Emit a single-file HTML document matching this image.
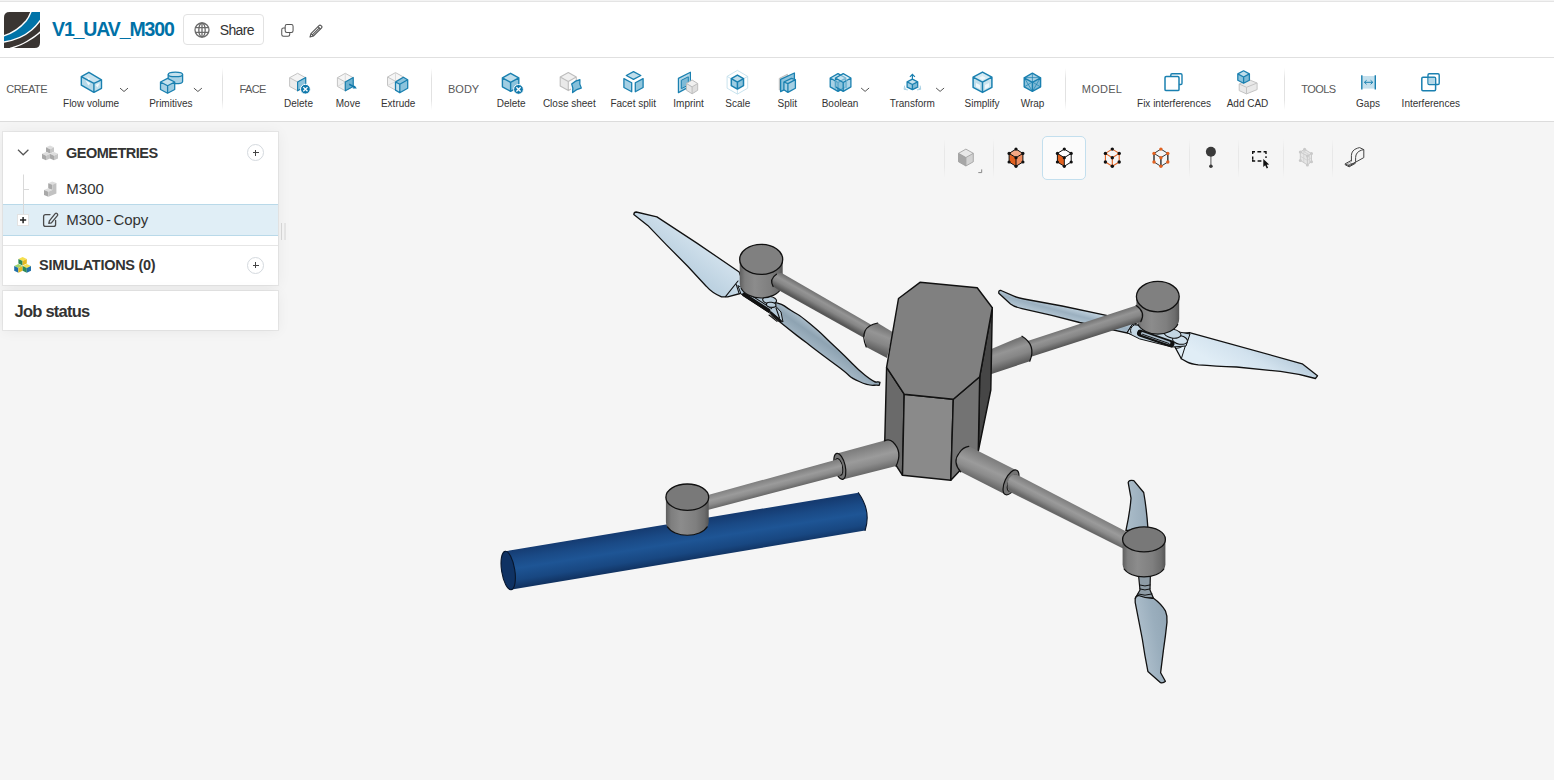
<!DOCTYPE html>
<html><head><meta charset="utf-8"><title>V1_UAV_M300</title>
<style>
*{box-sizing:border-box;margin:0;padding:0}
html,body{width:1554px;height:780px;overflow:hidden;background:#f5f5f5;font-family:"Liberation Sans",sans-serif;color:#333}
#top{position:absolute;left:0;top:0;width:1554px;height:58px;background:#fff;border-top:2px solid #e4e4e4;border-bottom:1px solid #e0e0e0}
#top:before{content:'';position:absolute;left:0;top:-2px;width:100%;height:1px;background:#f3f3f3}
#logo{position:absolute;left:4px;top:10px;width:36px;height:36px}
#title{position:absolute;left:52px;top:15px;font-size:19.5px;font-weight:bold;color:#0071a7;line-height:24px;white-space:nowrap;letter-spacing:-1.12px}
#share{position:absolute;left:183px;top:12px;width:81px;height:31px;border:1px solid #e2e2e2;border-radius:4px;background:#fff}
#share span{position:absolute;left:35.8px;top:6px;font-size:14px;line-height:18px;color:#333;letter-spacing:-0.65px}
#toolbar{position:absolute;left:0;top:58px;width:1554px;height:64px;background:#fff;border-bottom:1px solid #dcdcdc}
.grp{position:absolute;top:22.8px;font-size:11px;color:#595959;line-height:16px;white-space:nowrap}
.tl{position:absolute;top:38.5px;font-size:10px;color:#333;line-height:14px;white-space:nowrap;transform:translateX(-50%)}
.sep{position:absolute;top:10px;width:1px;height:42px;background:linear-gradient(#fff,#e2e2e2 25%,#e2e2e2 75%,#fff)}
.ico{position:absolute;overflow:visible}
.chev{position:absolute;top:30px;width:9px;height:6px;overflow:visible}
#panel{position:absolute;left:3px;top:132px;width:275px;height:153px;background:#fff;box-shadow:0 0 0 1px rgba(0,0,0,.05),0 1px 14px rgba(0,0,0,.06)}
#job{position:absolute;left:3px;top:291px;width:275px;height:39px;background:#fff;box-shadow:0 0 0 1px rgba(0,0,0,.05),0 1px 14px rgba(0,0,0,.06)}
#job span{position:absolute;left:11.5px;top:9px;font-size:16.5px;font-weight:bold;line-height:22px;letter-spacing:-0.75px;color:#333}
.row{position:absolute;left:0;width:275px}
.rt{position:absolute;font-size:15px;line-height:20px;white-space:nowrap;color:#333}
.plus{position:absolute;width:17px;height:17px;border:1px solid #d4d9de;border-radius:50%;background:#fff}
.plus:before{content:"";position:absolute;left:4.5px;top:7px;width:6px;height:1px;background:#444}
.plus:after{content:"";position:absolute;left:7px;top:4.5px;width:1px;height:6px;background:#444}
#vt{position:absolute;left:0;top:0}
.vsep{position:absolute;top:139px;width:1px;height:39px;background:linear-gradient(#f5f5f5,#e8e8e8 30%,#e8e8e8 70%,#f5f5f5)}
</style></head><body>
<div id="top">
<svg id="logo" viewBox="0 0 36 36">
<path d="M5.5 0H36V30.5Q36 36 30.5 36H0V5.5Q0 0 5.5 0Z" fill="#3a3532"/>
<path d="M0 23.8C8 21.5 16 16 22.2 8.8C24.4 6 25.8 3 26.9 0H36V8.8C33 13 30 16 27.6 18C20 24.5 10 28.5 0 30Z" fill="#0073a8"/>
<path d="M-0.5 23.9C8 21.5 16 16 22.2 8.8C24.4 6 25.8 3 27.1 -0.5" fill="none" stroke="#fff" stroke-width="1.4"/>
<path d="M-0.5 30.1C10 28.5 20 24.5 27.6 18C30 16 33 13 36.5 8.2" fill="none" stroke="#fff" stroke-width="1.4"/>
<path d="M6 36.4C13 34.5 18 32.5 22.9 29.5C28 26.5 32 24 36.5 19.8" fill="none" stroke="#fff" stroke-width="1.4"/>
</svg>
<div id="title">V1_UAV_M300</div>
<div id="share">
<svg style="position:absolute;left:10px;top:7px" width="16" height="16" viewBox="0 0 16 16" fill="none" stroke="#6b6b6b" stroke-width="1.3"><circle cx="8" cy="8" r="7"/><ellipse cx="8" cy="8" rx="3.2" ry="7"/><path d="M8 1V15M1.3 5.7H14.7M1.3 10.3H14.7"/></svg>
<span>Share</span></div>
<svg style="position:absolute;left:280.5px;top:22px" width="13" height="13" viewBox="0 0 14 14" fill="none" stroke="#555" stroke-width="1.1"><rect x="4.5" y="0.6" width="8.5" height="8.5" rx="1.8" fill="#fff"/><path d="M4.5 4.3H2.6Q0.8 4.3 0.8 6.1V11.4Q0.8 13.2 2.6 13.2H7.6Q9.4 13.2 9.4 11.4V9.1"/></svg>
<svg style="position:absolute;left:309px;top:22px" width="14" height="14" viewBox="0 0 14 14" fill="none" stroke="#555" stroke-width="1.1" stroke-linejoin="round"><path d="M1 13L2 9.6L10 1.6Q11 0.6 12 1.6L12.6 2.2Q13.4 3.2 12.4 4.2L4.4 12Z"/><path d="M2 9.6L4.4 12M9 2.6L11.4 5M3.6 10.6L10.4 3.8"/></svg>
</div>
<div id="toolbar">
<div class="grp" style="left:6.2px;letter-spacing:-0.49px">CREATE</div>
<div class="grp" style="left:239.4px;letter-spacing:-0.6px">FACE</div>
<div class="grp" style="left:448px;letter-spacing:0px">BODY</div>
<div class="grp" style="left:1081.8px;letter-spacing:0.24px">MODEL</div>
<div class="grp" style="left:1301.2px;letter-spacing:-0.53px">TOOLS</div>
<div class="tl" style="left:91.1px">Flow volume</div>
<div class="tl" style="left:170.8px">Primitives</div>
<div class="tl" style="left:298.5px">Delete</div>
<div class="tl" style="left:348px">Move</div>
<div class="tl" style="left:398.2px">Extrude</div>
<div class="tl" style="left:511.2px">Delete</div>
<div class="tl" style="left:569.3px">Close sheet</div>
<div class="tl" style="left:633.2px">Facet split</div>
<div class="tl" style="left:688.6px">Imprint</div>
<div class="tl" style="left:737.8px">Scale</div>
<div class="tl" style="left:787.3px">Split</div>
<div class="tl" style="left:840px">Boolean</div>
<div class="tl" style="left:912.3px">Transform</div>
<div class="tl" style="left:982.1px">Simplify</div>
<div class="tl" style="left:1032.5px">Wrap</div>
<div class="tl" style="left:1174px">Fix interferences</div>
<div class="tl" style="left:1247.5px">Add CAD</div>
<div class="tl" style="left:1368px">Gaps</div>
<div class="tl" style="left:1430.8px">Interferences</div>
<div class="sep" style="left:222px"></div>
<div class="sep" style="left:431px"></div>
<div class="sep" style="left:1064.5px"></div>
<div class="sep" style="left:1283.5px"></div>
<svg style="position:absolute;left:0;top:0" width="1554" height="64" viewBox="0 58 1554 64">
<g stroke-linejoin="round"><polygon points="88.9,72.3 101.5,79.8 93.9,83.4 81.3,76.6" fill="#c9e3ef"/><polygon points="81.3,76.6 93.9,83.4 93.9,92.4 81.3,85.2" fill="#b5d9e9"/><polygon points="93.9,83.4 101.5,79.8 101.5,88.3 93.9,92.4" fill="#c0dfec"/><path d="M88.9 72.3L101.5 79.8L101.5 88.3L93.9 92.4L81.3 85.2L81.3 76.6ZM81.3 76.6L93.9 83.4L101.5 79.8M93.9 83.4L93.9 92.4" fill="none" stroke="#1a80b0" stroke-width="1.4"/></g>
<path d="M85.6 80.6L90.4 83.2L88.4 85.6ZM95.6 85L99.6 83L97.6 87.6ZM86.8 77L90.6 79L88.6 80Z" fill="#f1f8fb"/>
<path d="M120.0 88.1L124.0 91.5L128.0 88.1" fill="none" stroke="#555" stroke-width="1"/>
<g stroke="#1a80b0" stroke-width="1.3" fill="#a9d2e5"><path d="M168.2 74.4V81.4A7.2 2.3 0 0 0 182.6 81.4V74.4"/><ellipse cx="175.4" cy="74.4" rx="7.2" ry="2.3" fill="#c6e2ee"/></g>
<polygon points="167.6,78.3 174.7,82.0 167.6,85.8 160.5,82.0" fill="#c6e2ee"/><polygon points="160.5,82.0 167.6,85.8 167.6,93.3 160.5,89.5" fill="#a9d2e5"/><polygon points="167.6,85.8 174.7,82.0 174.7,89.5 167.6,93.3" fill="#9ccbe1"/><path d="M167.6 78.3 L174.7 82.0 L174.7 89.5 L167.6 93.3 L160.5 89.5 L160.5 82.0Z M160.5 82.0 L167.6 85.8 L174.7 82.0 M167.6 85.8 L167.6 93.3" fill="none" stroke="#1a80b0" stroke-width="1.3" stroke-linejoin="round"/>
<path d="M193.9 88.1L197.9 91.5L201.9 88.1" fill="none" stroke="#555" stroke-width="1"/>
<polygon points="297.6,73.3 305.6,77.7 297.6,82.0 289.6,77.7" fill="#f4f4f4"/><polygon points="289.6,77.7 297.6,82.0 297.6,90.8 289.6,86.4" fill="#ececec"/><polygon points="297.6,82.0 305.6,77.7 305.6,86.4 297.6,90.8" fill="#7fbad6"/><path d="M297.6 73.3 L305.6 77.7 L305.6 86.4 L297.6 90.8 L289.6 86.4 L289.6 77.7Z M289.6 77.7 L297.6 82.0 L305.6 77.7 M297.6 82.0 L297.6 90.8" fill="none" stroke="#c4c4c4" stroke-width="1" stroke-linejoin="round"/>
<path d="M297.6 82L305.7 77.5L305.7 86L297.6 90.8Z" fill="#8cc3dc" stroke="#1a80b0" stroke-width="1.2" stroke-linejoin="round"/>
<circle cx="305.4" cy="89.2" r="4.9" fill="#0f78ab" stroke="#fff" stroke-width="1"/><path d="M303.3 87.1L307.5 91.3M307.5 87.1L303.3 91.3" stroke="#fff" stroke-width="1.3"/>
<polygon points="345.3,73.3 353.2,77.7 345.3,82.0 337.4,77.7" fill="#f6f6f6"/><polygon points="337.4,77.7 345.3,82.0 345.3,90.8 337.4,86.4" fill="#f0f0f0"/><polygon points="345.3,82.0 353.2,77.7 353.2,86.4 345.3,90.8" fill="#7fbad6"/><path d="M345.3 73.3 L353.2 77.7 L353.2 86.4 L345.3 90.8 L337.4 86.4 L337.4 77.7Z M337.4 77.7 L345.3 82.0 L353.2 77.7 M345.3 82.0 L345.3 90.8" fill="none" stroke="#c4c4c4" stroke-width="1" stroke-linejoin="round"/>
<path d="M337.4 86.5L345.3 82L353.2 86.5M345.3 73.3V82" stroke="#d6d6d6" stroke-width="0.8" fill="none"/>
<path d="M345.3 82L353.2 77.5L353.2 86.5L345.3 90.8Z" fill="#6fb2d0" stroke="#1a80b0" stroke-width="1.2" stroke-linejoin="round"/>
<path d="M349.2 84.2L355 87.4" stroke="#0f78ab" stroke-width="1.6"/><path d="M356.8 88.4L352.6 88.6L354.6 85.4Z" fill="#0f78ab"/>
<polygon points="395.5,72.6 403.5,77.0 395.5,81.3 387.5,77.0" fill="#f6f6f6"/><polygon points="387.5,77.0 395.5,81.3 395.5,90.1 387.5,85.7" fill="#f0f0f0"/><polygon points="395.5,81.3 403.5,77.0 403.5,85.7 395.5,90.1" fill="#f0f0f0"/><path d="M395.5 72.6 L403.5 77.0 L403.5 85.7 L395.5 90.1 L387.5 85.7 L387.5 77.0Z M387.5 77.0 L395.5 81.3 L403.5 77.0 M395.5 81.3 L395.5 90.1" fill="none" stroke="#c4c4c4" stroke-width="1" stroke-linejoin="round"/>
<path d="M387.4 85.6L395.5 81.6L403.4 85.6M395.5 72.6V81.6" stroke="#d6d6d6" stroke-width="0.8" fill="none"/>
<g stroke-linejoin="round"><polygon points="395.5,82 403.4,77.3 407.7,79.8 407.7,88.3 399.8,92.8 395.5,90.1" fill="#8cc3dc"/><polygon points="395.5,82 399.8,84.3 399.8,92.8 395.5,90.1" fill="#c4e0ed"/><path d="M395.5 82L403.4 77.3L407.7 79.8L407.7 88.3L399.8 92.8L395.5 90.1ZM395.5 82L399.8 84.3L407.7 79.8M399.8 84.3V92.8" fill="none" stroke="#1a80b0" stroke-width="1.3"/></g>
<polygon points="510.6,73.3 518.8,77.8 510.6,82.3 502.4,77.8" fill="#c0deeb"/><polygon points="502.4,77.8 510.6,82.3 510.6,91.3 502.4,86.8" fill="#9fcde2"/><polygon points="510.6,82.3 518.8,77.8 518.8,86.8 510.6,91.3" fill="#8cc3dc"/><path d="M510.6 73.3 L518.8 77.8 L518.8 86.8 L510.6 91.3 L502.4 86.8 L502.4 77.8Z M502.4 77.8 L510.6 82.3 L518.8 77.8 M510.6 82.3 L510.6 91.3" fill="none" stroke="#1a80b0" stroke-width="1.4" stroke-linejoin="round"/>
<circle cx="518.5" cy="89.4" r="4.9" fill="#0f78ab" stroke="#fff" stroke-width="1"/><path d="M516.4 87.3L520.6 91.5M520.6 87.3L516.4 91.5" stroke="#fff" stroke-width="1.3"/>
<g stroke-linejoin="round"><polygon points="568.3,72.4 576.3,76.9 568.3,81.5 560.2,76.9" fill="#f0f0f0"/><polygon points="560.2,76.9 568.3,81.5 568.3,90.6 560.2,86.1" fill="#e9e9e9"/><polygon points="568.3,81.5 576.3,76.9 576.3,86.1 568.3,90.6" fill="#fbfbfb"/><path d="M568.3 72.4L576.3 76.9L576.3 83M568.3 90.6L560.2 86.1L560.2 76.9L568.3 72.4M560.2 76.9L568.3 81.5L576.3 76.9M568.3 81.5V90.6L571 89" fill="none" stroke="#bdbdbd" stroke-width="1.1"/><path d="M571.7 84Q575.5 80.5 579.9 79.6Q579 84 581.3 88Q576.5 89 572.6 92.6Q573.6 88 571.7 84Z" fill="#86c0da" stroke="#1a80b0" stroke-width="1.3"/></g>
<g stroke="#1a80b0" stroke-width="1.3" stroke-linejoin="round"><polygon points="633.5,71.6 640.8,75.5 633.5,79.4 626.3,75.5" fill="#c0deeb"/><polygon points="623.9,78.6 631.7,82.8 631.7,91.8 623.9,87.5" fill="#a6d0e4"/><polygon points="635.3,82.8 643.1,78.6 643.1,87.5 635.3,91.8" fill="#93c7de"/></g>
<g stroke-linejoin="round"><polygon points="678.4,78.4 690.4,72.2 690.4,86.1 678.4,92.6" fill="#b4d8e8" stroke="#1a80b0" stroke-width="1.2"/><polygon points="681.3,80.3 688.3,76.8 688.3,85.1 681.3,88.7" fill="#7fbad6" stroke="#1a80b0" stroke-width="1"/></g>
<polygon points="692.1,80.0 697.7,83.5 692.1,86.9 686.5,83.5" fill="#f0f0f0"/><polygon points="686.5,83.5 692.1,86.9 692.1,93.8 686.5,90.3" fill="#e6e6e6"/><polygon points="692.1,86.9 697.7,83.5 697.7,90.3 692.1,93.8" fill="#dedede"/><path d="M692.1 80.0 L697.7 83.5 L697.7 90.3 L692.1 93.8 L686.5 90.3 L686.5 83.5Z M686.5 83.5 L692.1 86.9 L697.7 83.5 M692.1 86.9 L692.1 93.8" fill="none" stroke="#bdbdbd" stroke-width="1" stroke-linejoin="round"/>
<path d="M737.4 70.4L747.7 76.4L747.7 88.2L737.4 94.1L727.1 88.2L727.1 76.4ZM727.1 76.4L737.4 82.3L747.7 76.4M737.4 82.3V94.1" fill="none" stroke="#c3e0ec" stroke-width="0.9"/>
<polygon points="737.4,75.1 743.5,78.6 737.4,82.1 731.3,78.6" fill="#c0deeb"/><polygon points="731.3,78.6 737.4,82.1 737.4,89.1 731.3,85.6" fill="#9fcde2"/><polygon points="737.4,82.1 743.5,78.6 743.5,85.6 737.4,89.1" fill="#8cc3dc"/><path d="M737.4 75.1 L743.5 78.6 L743.5 85.6 L737.4 89.1 L731.3 85.6 L731.3 78.6Z M731.3 78.6 L737.4 82.1 L743.5 78.6 M737.4 82.1 L737.4 89.1" fill="none" stroke="#1a80b0" stroke-width="1.5" stroke-linejoin="round"/>
<g stroke-linejoin="round"><polygon points="779.3,78.4 787.4,74.3 787.4,86 779.3,90" fill="#dcdcdc" stroke="#bdbdbd" stroke-width="1"/><polygon points="780.6,79.4 794.4,73 794.4,84.6 780.6,91.6" fill="#8cc3dc" stroke="#1a80b0" stroke-width="1.3"/><polygon points="783.9,82 791.5,78.4 795.4,79.6 795.4,88.2 787.9,92.4 783.9,89.7" fill="#a6d0e4"/><path d="M783.9 82L791.5 78.4L795.4 79.6L795.4 88.2L787.9 92.4L783.9 89.7ZM783.9 82L787.9 83.6L795.4 79.6M787.9 83.6V92.4" fill="none" stroke="#1a80b0" stroke-width="1.3"/></g>
<g opacity="0.999"><polygon points="838.0,73.6 845.8,78.0 838.0,82.5 830.2,78.0" fill="#c6e2ee"/><polygon points="830.2,78.0 838.0,82.5 838.0,91.4 830.2,86.9" fill="#a9d2e5"/><polygon points="838.0,82.5 845.8,78.0 845.8,86.9 838.0,91.4" fill="#8cc3dc"/><path d="M838.0 73.6 L845.8 78.0 L845.8 86.9 L838.0 91.4 L830.2 86.9 L830.2 78.0Z M830.2 78.0 L838.0 82.5 L845.8 78.0 M838.0 82.5 L838.0 91.4" fill="none" stroke="#1a80b0" stroke-width="1.3" stroke-linejoin="round"/></g>
<g><polygon points="843.2,73.6 850.9,78.0 843.2,82.5 835.5,78.0" fill="rgba(198,226,238,.55)"/><polygon points="835.5,78.0 843.2,82.5 843.2,91.4 835.5,86.9" fill="rgba(140,195,220,.55)"/><polygon points="843.2,82.5 850.9,78.0 850.9,86.9 843.2,91.4" fill="rgba(150,200,224,.75)"/><path d="M843.2 73.6 L850.9 78.0 L850.9 86.9 L843.2 91.4 L835.5 86.9 L835.5 78.0Z M835.5 78.0 L843.2 82.5 L850.9 78.0 M843.2 82.5 L843.2 91.4" fill="none" stroke="#1a80b0" stroke-width="1.3" stroke-linejoin="round"/></g>
<path d="M835.4 80V89M846.6 80V88.6" stroke="#6fb2d0" stroke-width="0.8"/>
<path d="M861.1 88.0L865.1 91.4L869.1 88.0" fill="none" stroke="#555" stroke-width="1"/>
<polygon points="912.4,79.2 917.7,81.8 912.4,84.5 907.1,81.8" fill="#c6e2ee"/><polygon points="907.1,81.8 912.4,84.5 912.4,89.7 907.1,87.1" fill="#9fcde2"/><polygon points="912.4,84.5 917.7,81.8 917.7,87.1 912.4,89.7" fill="#7fbad6"/><path d="M912.4 79.2 L917.7 81.8 L917.7 87.1 L912.4 89.7 L907.1 87.1 L907.1 81.8Z M907.1 81.8 L912.4 84.5 L917.7 81.8 M912.4 84.5 L912.4 89.7" fill="none" stroke="#1a80b0" stroke-width="1.3" stroke-linejoin="round"/>
<path d="M912.4 79.4V74.8M909.9 76.9L912.4 74.3L914.9 76.9" fill="none" stroke="#1a80b0" stroke-width="1.2"/>
<path d="M907 87.3L904.4 88.9M904.7 85.6L904.1 89.3L907.8 89.9M917.8 87.3L920.4 88.9M920.1 85.6L920.7 89.3L917 89.9" fill="none" stroke="#a6d0e4" stroke-width="1"/>
<path d="M936.1 88.0L940.1 91.4L944.1 88.0" fill="none" stroke="#555" stroke-width="1"/>
<polygon points="982.5,72.1 991.9,77.2 982.5,82.2 973.1,77.2" fill="#d4e9f2"/><polygon points="973.1,77.2 982.5,82.2 982.5,92.4 973.1,87.3" fill="#c0deeb"/><polygon points="982.5,82.2 991.9,77.2 991.9,87.3 982.5,92.4" fill="#c9e4ef"/><path d="M982.5 72.1 L991.9 77.2 L991.9 87.3 L982.5 92.4 L973.1 87.3 L973.1 77.2Z M973.1 77.2 L982.5 82.2 L991.9 77.2 M982.5 82.2 L982.5 92.4" fill="none" stroke="#1a80b0" stroke-width="1.5" stroke-linejoin="round"/>
<path d="M979 78L982.5 76L986 78L982.5 80ZM976 83L980 85V89L976 87ZM985 85L989 83V87L985 89Z" fill="#eef7fb"/>
<polygon points="1032.4,73.2 1040.6,77.8 1032.4,82.3 1024.2,77.8" fill="#a6d0e4"/><polygon points="1024.2,77.8 1032.4,82.3 1032.4,91.4 1024.2,86.8" fill="#8cc3dc"/><polygon points="1032.4,82.3 1040.6,77.8 1040.6,86.8 1032.4,91.4" fill="#7fbad6"/><path d="M1032.4 73.2 L1040.6 77.8 L1040.6 86.8 L1032.4 91.4 L1024.2 86.8 L1024.2 77.8Z M1024.2 77.8 L1032.4 82.3 L1040.6 77.8 M1032.4 82.3 L1032.4 91.4" fill="none" stroke="#1a80b0" stroke-width="1.4" stroke-linejoin="round"/>
<path d="M1024.2 77.6L1032.4 91.4M1032.4 82L1024.2 86.9M1032.4 82L1040.5 86.9M1040.5 77.6L1032.4 91.4M1024.2 77.6H1040.5M1032.4 73.2V82" stroke="#1a80b0" stroke-width="0.7" fill="none"/>
<rect x="1170.8" y="73.7" width="11.2" height="10.8" rx="1.2" fill="#fff" stroke="#1a80b0" stroke-width="1.4"/><rect x="1165" y="76.6" width="14" height="14" rx="1.2" fill="#fff" stroke="#1a80b0" stroke-width="1.5"/>
<g stroke-linejoin="round"><polygon points="1248.5,79.5 1257.1,83 1257.1,89.6 1246.5,93.9 1239.2,90.6 1239.2,84" fill="#e9e9e9" stroke="#c4c4c4" stroke-width="1"/><path d="M1239.2 84L1246.5 87.3L1257.1 83M1246.5 87.3V93.9" fill="none" stroke="#c4c4c4" stroke-width="1"/></g>
<polygon points="1243.6,70.8 1249.4,73.9 1243.6,77.0 1237.8,73.9" fill="#c0deeb"/><polygon points="1237.8,73.9 1243.6,77.0 1243.6,83.3 1237.8,80.2" fill="#8cc3dc"/><polygon points="1243.6,77.0 1249.4,73.9 1249.4,80.2 1243.6,83.3" fill="#7fbad6"/><path d="M1243.6 70.8 L1249.4 73.9 L1249.4 80.2 L1243.6 83.3 L1237.8 80.2 L1237.8 73.9Z M1237.8 73.9 L1243.6 77.0 L1249.4 73.9 M1243.6 77.0 L1243.6 83.3" fill="none" stroke="#1a80b0" stroke-width="1.3" stroke-linejoin="round"/>
<rect x="1361.8" y="76" width="13.5" height="12.6" fill="#c4e0ed"/><path d="M1361.8 75.2V89.5M1375.3 75.2V89.5" stroke="#1a80b0" stroke-width="1.4"/><path d="M1364.6 82.3H1372.6M1366.6 80.3L1364.4 82.3L1366.6 84.3M1370.6 80.3L1372.8 82.3L1370.6 84.3" fill="none" stroke="#1a80b0" stroke-width="1"/>
<rect x="1428" y="73.7" width="11.2" height="10.8" rx="1.2" fill="#fff" stroke="#1a80b0" stroke-width="1.4"/><rect x="1421.8" y="77.2" width="13.8" height="13.5" rx="1.2" fill="none" stroke="#1a80b0" stroke-width="1.5"/><rect x="1428.7" y="77.9" width="6.2" height="5.9" fill="#b4d8e8"/>
</svg>
</div>
<div id="panel">
<svg style="position:absolute;left:0;top:0" width="275" height="154" viewBox="3 132 275 154">
<rect x="3" y="204" width="275" height="32" fill="#e0eef6"/>
<path d="M3 204.5H278M3 235.5H278" stroke="#b9d9e9" stroke-width="1"/>
<path d="M3 245.5H278" stroke="#e6e6e6" stroke-width="1"/>
<path d="M23.5 174.5V215M23.5 189.5H29" stroke="#d9d9d9" stroke-width="1" fill="none"/>
<path d="M18 149.8L23.2 154.8L28.4 149.8" fill="none" stroke="#555" stroke-width="1.2"/>
<!-- geometries icon: 3 cubes -->
<g stroke="none">
<polygon points="50,145.5 54,147.3 50,149.2 46,147.3" fill="#dedede"/><polygon points="46,147.3 50,149.2 50,153.6 46,151.8" fill="#a9a9a9"/><polygon points="50,149.2 54,147.3 54,151.8 50,153.6" fill="#c6c6c6"/>
<polygon points="46,152 50,153.8 46,155.7 42,153.8" fill="#dedede"/><polygon points="42,153.8 46,155.7 46,160.2 42,158.4" fill="#a9a9a9"/><polygon points="46,155.7 50,153.8 50,158.4 46,160.2" fill="#c6c6c6"/>
<polygon points="54,152 58,153.8 54,155.7 50,153.8" fill="#dedede"/><polygon points="50,153.8 54,155.7 54,160.2 50,158.4" fill="#a9a9a9"/><polygon points="54,155.7 58,153.8 58,158.4 54,160.2" fill="#c6c6c6"/>
</g>
<!-- M300 icon: L-shaped solid -->
<g stroke="none">
<polygon points="52.2,181.6 56.4,183 52.4,184.8 48.2,183.2" fill="#dedede"/>
<polygon points="48.2,183.2 52.4,184.8 52.4,190 48.2,188.4" fill="#a9a9a9"/>
<polygon points="48.2,188.2 52.4,190 48.4,191.8 44,190" fill="#dedede"/>
<polygon points="44,190 48.4,191.8 48.4,196.8 44,195" fill="#a9a9a9"/>
<polygon points="52.4,184.8 56.4,183 56.4,193.4 48.4,196.8 48.4,191.8 52.4,190" fill="#c2c2c2"/>
</g>
<!-- plus box -->
<rect x="17.5" y="214.5" width="11" height="11" fill="#fff" stroke="#e2e2e2" stroke-width="1"/>
<path d="M20 220.1H26.2M23.1 217V223.2" stroke="#222" stroke-width="1.5"/>
<!-- edit icon -->
<g fill="none" stroke="#4a4a4a" stroke-width="1.3" stroke-linejoin="round" stroke-linecap="round">
<path d="M50 214.6H45.6Q43.6 214.6 43.6 216.6V224.4Q43.6 226.4 45.6 226.4H53.6Q55.6 226.4 55.6 224.4V220.4"/>
<path d="M49.4 220.8L48.8 223.4L51.4 222.8L57.6 215.4Q58 214.6 57.2 213.8L56.8 213.4Q56 212.8 55.2 213.6Z"/>
</g>
<!-- simulations icon -->
<g stroke="none">
<polygon points="22.6,257 26.8,259 22.6,261 18.4,259" fill="#f6e04c"/><polygon points="18.4,259 22.6,261 22.6,265.6 18.4,263.6" fill="#2e8a57"/><polygon points="22.6,261 26.8,259 26.8,263.6 22.6,265.6" fill="#e6b820"/>
<polygon points="18.4,264 22.6,266 18.4,268 14.2,266" fill="#9fd36a"/><polygon points="14.2,266 18.4,268 18.4,272.8 14.2,270.8" fill="#1f6fa8"/><polygon points="18.4,268 22.6,266 22.6,270.8 18.4,272.8" fill="#e6b820"/>
<polygon points="26.8,264 31,266 26.8,268 22.6,266" fill="#f6e04c"/><polygon points="22.6,266 26.8,268 26.8,272.8 22.6,270.8" fill="#2e8a57"/><polygon points="26.8,268 31,266 31,270.8 26.8,272.8" fill="#1f6fa8"/>
</g>
</svg>
<div class="rt" style="left:63px;top:10.5px;font-size:14.5px;font-weight:bold;letter-spacing:-0.5px">GEOMETRIES</div>
<div class="rt" style="left:63.3px;top:46.5px">M300</div>
<div class="rt" style="left:63.3px;top:77.5px;word-spacing:-1.5px;letter-spacing:-0.08px">M300 - Copy</div>
<div class="rt" style="left:36px;top:122.5px;font-size:14.5px;font-weight:bold;letter-spacing:-0.28px">SIMULATIONS (0)</div>
<div class="plus" style="left:244px;top:12px"></div>
<div class="plus" style="left:244px;top:124.5px"></div>
</div>
<div id="job"><span>Job status</span></div>
<svg style="position:absolute;left:280px;top:222px" width="7" height="20" viewBox="0 0 7 20"><path d="M1.5 1V18M5 1V18" stroke="#d4d4d4" stroke-width="1"/></svg>
<svg id="scene" style="position:absolute;left:0;top:0" width="1554" height="780" viewBox="0 0 1554 780">
<defs><linearGradient id="g1" gradientUnits="userSpaceOnUse" x1="816.0" y1="322.0" x2="802.0" y2="342.0"><stop offset="0" stop-color="#b9cad6"/><stop offset="0.5" stop-color="#8ea3b2"/><stop offset="1" stop-color="#a3b6c4"/></linearGradient><linearGradient id="g2" gradientUnits="userSpaceOnUse" x1="700.0" y1="236.0" x2="680.0" y2="262.0"><stop offset="0" stop-color="#d4e3ee"/><stop offset="1" stop-color="#bdd2e1"/></linearGradient><linearGradient id="g3" gradientUnits="userSpaceOnUse" x1="739.7" y1="259.4" x2="782.7" y2="259.4"><stop offset="0" stop-color="#5e5e5e"/><stop offset="0.12" stop-color="#7e7e7e"/><stop offset="0.35" stop-color="#8c8c8c"/><stop offset="0.7" stop-color="#7f7f7f"/><stop offset="0.9" stop-color="#6c6c6c"/><stop offset="1" stop-color="#555"/></linearGradient><linearGradient id="g4" gradientUnits="userSpaceOnUse" x1="826.0" y1="298.5" x2="819.0" y2="311.0"><stop offset="0" stop-color="#727272"/><stop offset="0.33" stop-color="#959595"/><stop offset="0.62" stop-color="#868686"/><stop offset="1" stop-color="#575757"/></linearGradient><linearGradient id="g5" gradientUnits="userSpaceOnUse" x1="882.5" y1="326.0" x2="872.5" y2="351.5"><stop offset="0" stop-color="#727272"/><stop offset="0.33" stop-color="#959595"/><stop offset="0.62" stop-color="#868686"/><stop offset="1" stop-color="#575757"/></linearGradient><linearGradient id="g6" gradientUnits="userSpaceOnUse" x1="1060.0" y1="303.0" x2="1056.0" y2="318.0"><stop offset="0" stop-color="#c6d7e3"/><stop offset="0.5" stop-color="#9bb0c0"/><stop offset="1" stop-color="#b6c9d6"/></linearGradient><linearGradient id="g7" gradientUnits="userSpaceOnUse" x1="1262.0" y1="340.0" x2="1240.0" y2="378.0"><stop offset="0" stop-color="#b9cddc"/><stop offset="0.45" stop-color="#d2e2ee"/><stop offset="1" stop-color="#e0edf6"/></linearGradient><linearGradient id="g8" gradientUnits="userSpaceOnUse" x1="1136.4" y1="296.6" x2="1179.2" y2="296.6"><stop offset="0" stop-color="#5e5e5e"/><stop offset="0.12" stop-color="#7e7e7e"/><stop offset="0.35" stop-color="#8c8c8c"/><stop offset="0.7" stop-color="#7f7f7f"/><stop offset="0.9" stop-color="#6c6c6c"/><stop offset="1" stop-color="#555"/></linearGradient><linearGradient id="g9" gradientUnits="userSpaceOnUse" x1="1085.0" y1="322.0" x2="1090.0" y2="337.6"><stop offset="0" stop-color="#727272"/><stop offset="0.33" stop-color="#959595"/><stop offset="0.62" stop-color="#868686"/><stop offset="1" stop-color="#575757"/></linearGradient><linearGradient id="g10" gradientUnits="userSpaceOnUse" x1="1008.0" y1="342.0" x2="1016.0" y2="366.0"><stop offset="0" stop-color="#727272"/><stop offset="0.33" stop-color="#959595"/><stop offset="0.62" stop-color="#868686"/><stop offset="1" stop-color="#575757"/></linearGradient><linearGradient id="g11" gradientUnits="userSpaceOnUse" x1="686.0" y1="522.0" x2="692.0" y2="560.0"><stop offset="0" stop-color="#153b71"/><stop offset="0.25" stop-color="#1a4a86"/><stop offset="0.5" stop-color="#1e5595"/><stop offset="0.8" stop-color="#184781"/><stop offset="1" stop-color="#113362"/></linearGradient><linearGradient id="g12" gradientUnits="userSpaceOnUse" x1="865.0" y1="446.5" x2="871.5" y2="472.5"><stop offset="0" stop-color="#7c7c7c"/><stop offset="0.45" stop-color="#9b9b9b"/><stop offset="0.7" stop-color="#8c8c8c"/><stop offset="1" stop-color="#686868"/></linearGradient><linearGradient id="g13" gradientUnits="userSpaceOnUse" x1="775.0" y1="476.0" x2="779.0" y2="491.2"><stop offset="0" stop-color="#7c7c7c"/><stop offset="0.45" stop-color="#9b9b9b"/><stop offset="0.7" stop-color="#8c8c8c"/><stop offset="1" stop-color="#686868"/></linearGradient><linearGradient id="g14" gradientUnits="userSpaceOnUse" x1="665.9" y1="497.2" x2="708.7" y2="497.2"><stop offset="0" stop-color="#5e5e5e"/><stop offset="0.12" stop-color="#7e7e7e"/><stop offset="0.35" stop-color="#8c8c8c"/><stop offset="0.7" stop-color="#7f7f7f"/><stop offset="0.9" stop-color="#6c6c6c"/><stop offset="1" stop-color="#555"/></linearGradient><linearGradient id="g15" gradientUnits="userSpaceOnUse" x1="1128.0" y1="505.0" x2="1148.0" y2="505.0"><stop offset="0" stop-color="#a9bbc8"/><stop offset="1" stop-color="#97abba"/></linearGradient><linearGradient id="g16" gradientUnits="userSpaceOnUse" x1="1138.0" y1="630.0" x2="1166.0" y2="625.0"><stop offset="0" stop-color="#aebfcc"/><stop offset="0.6" stop-color="#9aaebd"/><stop offset="1" stop-color="#93a7b6"/></linearGradient><linearGradient id="g17" gradientUnits="userSpaceOnUse" x1="992.0" y1="458.0" x2="981.0" y2="482.0"><stop offset="0" stop-color="#7c7c7c"/><stop offset="0.45" stop-color="#9b9b9b"/><stop offset="0.7" stop-color="#8c8c8c"/><stop offset="1" stop-color="#686868"/></linearGradient><linearGradient id="g18" gradientUnits="userSpaceOnUse" x1="1070.0" y1="502.0" x2="1062.5" y2="516.5"><stop offset="0" stop-color="#7c7c7c"/><stop offset="0.45" stop-color="#9b9b9b"/><stop offset="0.7" stop-color="#8c8c8c"/><stop offset="1" stop-color="#686868"/></linearGradient><linearGradient id="g19" gradientUnits="userSpaceOnUse" x1="1122.6" y1="539.4" x2="1165.4" y2="539.4"><stop offset="0" stop-color="#5e5e5e"/><stop offset="0.12" stop-color="#7e7e7e"/><stop offset="0.35" stop-color="#8c8c8c"/><stop offset="0.7" stop-color="#7f7f7f"/><stop offset="0.9" stop-color="#6c6c6c"/><stop offset="1" stop-color="#555"/></linearGradient></defs>
<path d="M772.0 306.0C773.9 305.0 771.2 301.5 777.7 303.1C784.2 304.7 780.7 303.9 791.5 310.8C802.3 317.7 794.6 311.0 810.0 323.8C825.4 336.6 819.2 332.0 837.7 349.2C856.2 366.4 851.3 364.4 865.4 375.4C879.5 386.4 875.1 380.0 880.0 382.3L880.0 382.3C879.7 383.3 879.5 384.4 879.2 385.4L879.2 385.4C872.5 384.1 873.0 387.9 859.2 381.5C845.4 375.1 855.1 379.0 837.7 366.2C820.3 353.4 826.4 358.0 806.9 343.1C787.4 328.2 791.2 331.3 779.2 321.5C767.2 311.7 773.6 316.4 770.8 313.8Z" fill="url(#g1)" stroke="#111" stroke-width="1.3" stroke-linejoin="round" stroke-linecap="round" />
<path d="M633.8 214.6Q634 212 636.2 212L656.9 216.9L696.9 243.1L739.2 272L745 288L742 293L727.7 296.9L721.5 296.9Q712 293 706.2 286.2L687.7 266.2L666.2 244.6L647.7 225.4Z" fill="url(#g2)" stroke="#111" stroke-width="1.3" stroke-linejoin="round" stroke-linecap="round" />
<path d="M725.5 296.6L738 281M736.3 284.6L738.8 292.6" fill="none" stroke="#111" stroke-width="1.1" stroke-linejoin="round" stroke-linecap="round" />
<path d="M738 286L741 294L768 312L783 322L781 312L770 300L752 292Z" fill="#b5c9d8" stroke="#111" stroke-width="1" stroke-linejoin="round" stroke-linecap="round" />
<path d="M744 294.6L768.5 310.4" fill="none" stroke="#111" stroke-width="3.8" stroke-linejoin="round" stroke-linecap="round" />
<path d="M768 310L781 321.6" fill="none" stroke="#111" stroke-width="1.6" stroke-linejoin="round" stroke-linecap="round" />
<path d="M748.4 293.6L771.6 308.6" fill="none" stroke="#111" stroke-width="1.1" stroke-linejoin="round" stroke-linecap="round" />
<path d="M771 312L781 320.5M776 308L779.5 318M769 315L777 321.4" fill="none" stroke="#111" stroke-width="1.1" stroke-linejoin="round" stroke-linecap="round" />
<ellipse cx="769.6" cy="300.2" rx="7" ry="3.7" transform="rotate(8 769.6 300.2)" fill="#b9cddb" stroke="#111" stroke-width="1.1"/>
<ellipse cx="771.2" cy="304.8" rx="4.8" ry="2.5" transform="rotate(8 771.2 304.8)" fill="#b9cddb" stroke="#111" stroke-width="1.1"/>
<path d="M739.7 259.4V283.0A21.5 15.0 0 0 0 782.7 283.0V259.4Z" fill="url(#g3)" stroke="none" stroke-width="1.1" stroke-linejoin="round" stroke-linecap="round" />
<path d="M741.2 288.5A21.5 15.0 0 0 0 781.2 288.5" fill="none" stroke="#111" stroke-width="1.2" stroke-linejoin="round" stroke-linecap="round" />
<ellipse cx="761.2" cy="259.4" rx="21.5" ry="15.0" fill="#808080" stroke="#111" stroke-width="1.3"/>
<path d="M781.2 272.7L870.8 324.6L863.8 337.7L779.2 290.4L773.1 286.5Q769 279 776.5 274.2Z" fill="url(#g4)" stroke="none" stroke-width="1.1" stroke-linejoin="round" stroke-linecap="round" />
<path d="M773.1 286.5Q769 279 776.5 274.2" fill="none" stroke="#111" stroke-width="1.2" stroke-linejoin="round" stroke-linecap="round" />
<path d="M893 332.2L877.7 323Q861 326 866.2 347L887 358Z" fill="url(#g5)" stroke="none" stroke-width="1.1" stroke-linejoin="round" stroke-linecap="round" />
<path d="M877.7 323Q858 327 866.2 347" fill="none" stroke="#111" stroke-width="1.2" stroke-linejoin="round" stroke-linecap="round" />
<path d="M998.8 293.2Q998.4 290 1001 290.5L1014.5 296.4Q1018 297.9 1024 299L1062.1 306L1106.3 315.3L1136.2 323.5L1132 334L1111.5 329.7L1079.6 322.5L1051.8 315.3L1022 308.6Q1014 306.8 1010.5 304Z" fill="url(#g6)" stroke="#111" stroke-width="1.3" stroke-linejoin="round" stroke-linecap="round" />
<path d="M1189.5 332.6L1302.2 363.8L1317.5 375.8L1315.4 378.5Q1298 373.6 1280.4 371.4L1236.6 367Q1215 366.2 1198.3 364.9Q1191 364 1187.4 362.1L1181.3 358.8L1173.1 343.5L1178.6 333.7Z" fill="url(#g7)" stroke="#111" stroke-width="1.3" stroke-linejoin="round" stroke-linecap="round" />
<path d="M1189.5 332.6L1181.3 358.8M1175.5 348.5Q1184 348 1186.4 341.5" fill="none" stroke="#111" stroke-width="1" stroke-linejoin="round" stroke-linecap="round" />
<path d="M1127.3 332.3L1132.1 324.6L1146 326L1190 334L1186 346L1172 347L1140 339Z" fill="#c3d6e3" stroke="#111" stroke-width="1" stroke-linejoin="round" stroke-linecap="round" />
<path d="M1127.3 332.3L1132.1 324.6M1131 333Q1129 328 1134 325" fill="none" stroke="#111" stroke-width="1" stroke-linejoin="round" stroke-linecap="round" />
<path d="M1140.5 333.2L1171 343.8" fill="none" stroke="#111" stroke-width="7" stroke-linejoin="round" stroke-linecap="round" />
<path d="M1142.5 333.6L1169 342.8" fill="none" stroke="#a9bccb" stroke-width="3" stroke-linejoin="round" stroke-linecap="round" />
<path d="M1142.5 334.3L1169 343.5" fill="none" stroke="#111" stroke-width="1" stroke-linejoin="round" stroke-linecap="round" />
<ellipse cx="1180" cy="340" rx="7.6" ry="4.2" transform="rotate(10 1180 340)" fill="#cfe0ec" stroke="#111" stroke-width="1"/>
<ellipse cx="1172.5" cy="333.6" rx="8.6" ry="4.4" transform="rotate(10 1172.5 333.6)" fill="#c3d6e3" stroke="#111" stroke-width="1"/>
<path d="M1136.4 296.6V318.9A21.4 15.2 0 0 0 1179.2 318.9V296.6Z" fill="url(#g8)" stroke="none" stroke-width="1.1" stroke-linejoin="round" stroke-linecap="round" />
<path d="M1137.9 324.5A21.4 15.2 0 0 0 1177.7 324.5" fill="none" stroke="#111" stroke-width="1.2" stroke-linejoin="round" stroke-linecap="round" />
<ellipse cx="1157.8" cy="296.6" rx="21.4" ry="15.2" fill="#808080" stroke="#111" stroke-width="1.3"/>
<path d="M1136.2 305.4L1020 343.6L1025 358.8L1140.8 321.6Q1146 312 1136.2 305.4Z" fill="url(#g9)" stroke="none" stroke-width="1.1" stroke-linejoin="round" stroke-linecap="round" />
<path d="M1140.8 321.6Q1146 312 1136.2 305.4" fill="none" stroke="#111" stroke-width="1.2" stroke-linejoin="round" stroke-linecap="round" />
<path d="M990.8 349.2L1022 336.2Q1036 345 1029.8 361.2L990.8 374.2Z" fill="url(#g10)" stroke="none" stroke-width="1.1" stroke-linejoin="round" stroke-linecap="round" />
<path d="M1022 336.2Q1036.5 345 1029.8 361.2" fill="none" stroke="#111" stroke-width="1.2" stroke-linejoin="round" stroke-linecap="round" />
<polygon points="992.3,307.7 990.8,390.0 978.3,451.0 979.7,376.7" fill="#464646" stroke="#111" stroke-width="1.45" stroke-linejoin="round" />
<polygon points="886.6,367.3 904.2,394.2 902.5,475.3 884.6,447.5" fill="#6a6a6a" stroke="#111" stroke-width="1.45" stroke-linejoin="round" />
<polygon points="904.2,394.2 953.3,399.2 950.8,480.3 902.5,475.3" fill="#8a8a8a" stroke="#111" stroke-width="1.45" stroke-linejoin="round" />
<polygon points="953.3,399.2 979.7,376.7 978.3,451.0 950.8,480.3" fill="#737373" stroke="#111" stroke-width="1.45" stroke-linejoin="round" />
<polygon points="920.0,282.3 977.2,287.7 992.3,307.7 979.7,376.7 953.3,399.2 904.2,394.2 886.6,367.3 898.5,298.5" fill="#808080" stroke="#111" stroke-width="1.45" stroke-linejoin="round" />
<path d="M504.3 551.4L858.4 492.7Q871.5 511 865.1 530.5L511.9 589.5Z" fill="url(#g11)" stroke="none" stroke-width="1.1" stroke-linejoin="round" stroke-linecap="round" />
<path d="M858.4 492.7Q871.5 511 865.1 530.5" fill="none" stroke="#08162c" stroke-width="1.1" stroke-linejoin="round" stroke-linecap="round" />
<ellipse cx="508.2" cy="570.5" rx="6.6" ry="19.4" transform="rotate(-9 508.2 570.5)" fill="#0f3263" stroke="#08162c" stroke-width="1.1"/>
<path d="M836.9 453.5L884.6 440.6L890.8 439Q903 450 896.2 465.9L842.8 479.4Z" fill="url(#g12)" stroke="none" stroke-width="1.1" stroke-linejoin="round" stroke-linecap="round" />
<path d="M884.4 440.9Q889 438.5 893 442Q903 452 896 466.2" fill="none" stroke="#111" stroke-width="1.2" stroke-linejoin="round" stroke-linecap="round" />
<ellipse cx="839.8" cy="466.4" rx="5.4" ry="13.3" transform="rotate(-13 839.8 466.4)" fill="#747474" stroke="#111" stroke-width="1.2"/>
<ellipse cx="839" cy="466.8" rx="3.4" ry="8.6" transform="rotate(-13 839 466.8)" fill="#888" stroke="#111" stroke-width="1"/>
<path d="M700 497.2L836.9 459.5Q841.5 462 841.9 466Q842.4 471 839.6 475.5L700 512Z" fill="url(#g13)" stroke="none" stroke-width="1.1" stroke-linejoin="round" stroke-linecap="round" />
<path d="M665.9 497.2V522.0A21.4 13.2 0 0 0 708.7 522.0V497.2Z" fill="url(#g14)" stroke="none" stroke-width="1.1" stroke-linejoin="round" stroke-linecap="round" />
<path d="M667.4 526.9A21.4 13.2 0 0 0 707.2 526.9" fill="none" stroke="#111" stroke-width="1.2" stroke-linejoin="round" stroke-linecap="round" />
<ellipse cx="687.3" cy="497.2" rx="21.4" ry="13.2" fill="#797979" stroke="#111" stroke-width="1.3"/>
<path d="M1128.2 482.7Q1128.6 479.6 1133.8 480.7L1143.7 492.5Q1146.5 508 1147.9 528L1125.9 530.6Q1130 512 1131 498.2Z" fill="url(#g15)" stroke="#111" stroke-width="1.3" stroke-linejoin="round" stroke-linecap="round" />
<path d="M1138.4 574L1150.4 574L1150 590L1153.5 598.2L1135.2 598.2L1140 590Z" fill="#8e9ca6" stroke="#111" stroke-width="1.2" stroke-linejoin="round" stroke-linecap="round" />
<path d="M1139.6 585Q1145 587 1150.2 585M1139.8 589Q1145 591 1150 589M1138 594Q1145 596.5 1152 594" fill="none" stroke="#111" stroke-width="1" stroke-linejoin="round" stroke-linecap="round" />
<path d="M1135.2 598.8Q1136 595.5 1138.5 595.5Q1146 598.5 1153.5 598.2Q1161 603.5 1165.4 610.8Q1167.6 616 1167 622.1Q1165.4 637 1163.4 650.3L1160.6 672.8L1165.4 681.3Q1163.4 683.4 1160.6 682.7L1147.9 671.4Q1144.6 655 1142.3 639L1135.2 602.4Z" fill="url(#g16)" stroke="#111" stroke-width="1.3" stroke-linejoin="round" stroke-linecap="round" />
<path d="M968.8 446.3L1016.9 470.4L1005.4 494.4L960.7 471.8Q952 462 959.2 453Q963 447 968.8 446.3Z" fill="url(#g17)" stroke="none" stroke-width="1.1" stroke-linejoin="round" stroke-linecap="round" />
<path d="M968.8 446.3Q963 447 959.2 453Q952 462 960.7 471.8" fill="none" stroke="#111" stroke-width="1.2" stroke-linejoin="round" stroke-linecap="round" />
<ellipse cx="1011" cy="482.4" rx="6.2" ry="13.4" transform="rotate(25 1011 482.4)" fill="#747474" stroke="#111" stroke-width="1.2"/>
<ellipse cx="1012.4" cy="483" rx="4" ry="9" transform="rotate(25 1012.4 483)" fill="#888" stroke="#111" stroke-width="1"/>
<path d="M1016 474.2L1130 533.5L1124 549L1009.2 491.5Q1006 484 1009 478.5Q1012 474 1016 474.2Z" fill="url(#g18)" stroke="none" stroke-width="1.1" stroke-linejoin="round" stroke-linecap="round" />
<path d="M1122.6 539.4V564.4A21.4 12.5 0 0 0 1165.4 564.4V539.4Z" fill="url(#g19)" stroke="none" stroke-width="1.1" stroke-linejoin="round" stroke-linecap="round" />
<path d="M1124.1 569.0A21.4 12.5 0 0 0 1163.9 569.0" fill="none" stroke="#111" stroke-width="1.2" stroke-linejoin="round" stroke-linecap="round" />
<ellipse cx="1144.0" cy="539.4" rx="21.4" ry="12.5" fill="#787878" stroke="#111" stroke-width="1.3"/>
</svg>
<svg id="vt" width="1554" height="780" viewBox="0 0 1554 780" style="pointer-events:none">
<polygon points="965.9,149.1 973.3,153.3 965.9,157.5 958.5,153.3" fill="#e8e8e8"/><polygon points="958.5,153.3 965.9,157.5 965.9,166.0 958.5,161.8" fill="#a6a6a6"/><polygon points="965.9,157.5 973.3,153.3 973.3,161.8 965.9,166.0" fill="#d2d2d2"/>
<path d="M965.9 149.1L973.3 153.3L973.3 161.8L965.9 166.0L958.5 161.8L958.5 153.3ZM958.5 153.3L965.9 157.5L973.3 153.3M965.9 157.5L965.9 166.0" fill="none" stroke="#9a9a9a" stroke-width="0.8" stroke-linejoin="round"/>
<path d="M978.3 172.6H981.7V169.4" fill="none" stroke="#888" stroke-width="1"/>
<polygon points="1016.0,149.1 1022.9,153.4 1016.0,157.7 1009.1,153.4" fill="#f5a884"/><polygon points="1009.1,153.4 1016.0,157.7 1016.0,166.3 1009.1,162.0" fill="#e2611f"/><polygon points="1016.0,157.7 1022.9,153.4 1022.9,162.0 1016.0,166.3" fill="#ef8c5e"/>
<path d="M1016.0 149.1L1022.9 153.4L1022.9 162.0L1016.0 166.3L1009.1 162.0L1009.1 153.4ZM1009.1 153.4L1016.0 157.7L1022.9 153.4M1016.0 157.7L1016.0 166.3" fill="none" stroke="#111" stroke-width="1" stroke-linejoin="round"/>
<circle cx="1016.0" cy="149.1" r="1.6" fill="#111"/><circle cx="1009.1" cy="153.4" r="1.6" fill="#111"/><circle cx="1022.9" cy="153.4" r="1.6" fill="#111"/><circle cx="1016.0" cy="157.7" r="1.6" fill="#111"/><circle cx="1009.1" cy="162.0" r="1.6" fill="#111"/><circle cx="1016.0" cy="166.3" r="1.6" fill="#111"/><circle cx="1022.9" cy="162.0" r="1.6" fill="#111"/>
<rect x="1042.5" y="136.5" width="43" height="43" rx="4.5" fill="#fbfbfb" stroke="#c3dfee" stroke-width="1"/>
<polygon points="1064.3,149.1 1071.2,153.4 1064.3,157.7 1057.4,153.4" fill="#fff"/><polygon points="1057.4,153.4 1064.3,157.7 1064.3,166.3 1057.4,162.0" fill="#e2611f"/><polygon points="1064.3,157.7 1071.2,153.4 1071.2,162.0 1064.3,166.3" fill="#fff"/>
<path d="M1064.3 149.1L1071.2 153.4L1071.2 162.0L1064.3 166.3L1057.4 162.0L1057.4 153.4ZM1057.4 153.4L1064.3 157.7L1071.2 153.4M1064.3 157.7L1064.3 166.3" fill="none" stroke="#111" stroke-width="1" stroke-linejoin="round"/>
<circle cx="1064.3" cy="149.1" r="1.6" fill="#111"/><circle cx="1057.4" cy="153.4" r="1.6" fill="#111"/><circle cx="1071.2" cy="153.4" r="1.6" fill="#111"/><circle cx="1064.3" cy="157.7" r="1.6" fill="#111"/><circle cx="1057.4" cy="162.0" r="1.6" fill="#111"/><circle cx="1064.3" cy="166.3" r="1.6" fill="#111"/><circle cx="1071.2" cy="162.0" r="1.6" fill="#111"/>
<path d="M1112.3 149.1L1119.2 153.4L1119.2 162.0L1112.3 166.3L1105.4 162.0L1105.4 153.4ZM1105.4 153.4L1112.3 157.7L1119.2 153.4M1112.3 157.7L1112.3 166.3" fill="none" stroke="#e2611f" stroke-width="1.1" stroke-linejoin="round"/>
<circle cx="1112.3" cy="149.1" r="1.7" fill="#111"/><circle cx="1105.4" cy="153.4" r="1.7" fill="#111"/><circle cx="1119.2" cy="153.4" r="1.7" fill="#111"/><circle cx="1112.3" cy="157.7" r="1.7" fill="#111"/><circle cx="1105.4" cy="162.0" r="1.7" fill="#111"/><circle cx="1112.3" cy="166.3" r="1.7" fill="#111"/><circle cx="1119.2" cy="162.0" r="1.7" fill="#111"/>
<path d="M1154.0 153.4V162.0M1160.9 157.7V166.3M1167.8 153.4V162.0" stroke="#8a8a8a" stroke-width="1.6"/>
<path d="M1160.9 149.1L1167.8 153.4L1167.8 162.0L1160.9 166.3L1154.0 162.0L1154.0 153.4ZM1154.0 153.4L1160.9 157.7L1167.8 153.4M1160.9 157.7L1160.9 166.3" fill="none" stroke="#222" stroke-width="0.9" stroke-linejoin="round"/>
<circle cx="1160.9" cy="149.1" r="1.7" fill="#e2611f"/><circle cx="1154.0" cy="153.4" r="1.7" fill="#e2611f"/><circle cx="1167.8" cy="153.4" r="1.7" fill="#e2611f"/><circle cx="1160.9" cy="157.7" r="1.7" fill="#e2611f"/><circle cx="1154.0" cy="162.0" r="1.7" fill="#e2611f"/><circle cx="1160.9" cy="166.3" r="1.7" fill="#e2611f"/><circle cx="1167.8" cy="162.0" r="1.7" fill="#e2611f"/>
<path d="M1210.9 152V166" stroke="#666" stroke-width="1.1"/><circle cx="1210.9" cy="151.8" r="5" fill="#3a3a3a"/><circle cx="1210.9" cy="166.2" r="1.8" fill="#3a3a3a"/>
<path d="M1252.7 154V151.8H1255M1257.4 151.8H1261.2M1263.6 151.8H1266V154M1266 156.2V158M1252.7 156.4V159.2M1252.7 159.4V161H1255.2M1257.6 161H1261.4" fill="none" stroke="#111" stroke-width="1.4"/>
<path d="M1263.3 158.9L1263.3 166.9L1265.2 165.2L1266.7 168.4L1268.1 167.7L1266.7 164.7L1269.2 164.5Z" fill="#111"/>
<polygon points="1304.6,149.2 1311.5,153.6 1311.5,161.7 1307.4,164.9 1300.3,160.4 1300.3,152.0" fill="#e6e6e6"/>
<path d="M1304.6 149.2L1311.5 153.6L1311.5 161.7L1307.4 164.9L1300.3 160.4L1300.3 152.0ZM1300.3 152.0L1307.4 155.9L1311.5 153.6M1307.4 155.9L1307.4 164.9" fill="none" stroke="#c6c6c6" stroke-width="0.9" stroke-linejoin="round"/>
<path d="M1303.8 154V162.6M1309.4 154.8V163.2M1300.3 156.2L1307.4 160.4L1311.5 157.6M1302.4 150.6L1309.4 154.8M1306.4 149.8L1303 153.4" stroke="#cdcdcd" stroke-width="0.7" fill="none"/>
<circle cx="1304.6" cy="149.2" r="1.5" fill="#c9c9c9"/><circle cx="1300.3" cy="152.0" r="1.5" fill="#c9c9c9"/><circle cx="1311.5" cy="153.6" r="1.5" fill="#c9c9c9"/><circle cx="1307.4" cy="155.9" r="1.5" fill="#c9c9c9"/><circle cx="1300.3" cy="160.4" r="1.5" fill="#c9c9c9"/><circle cx="1307.4" cy="164.9" r="1.5" fill="#c9c9c9"/><circle cx="1311.5" cy="161.7" r="1.5" fill="#c9c9c9"/>
<g fill="none" stroke="#444" stroke-width="1" stroke-linejoin="round"><path d="M1351.4 161.4V155.5Q1351.6 150 1357.4 148.2L1359.6 147.6L1363.8 149.6V157.6L1351.6 164.4"/><path d="M1363.8 149.6L1361.4 150.2Q1355.8 152 1355.6 157.5V161.8M1359.6 147.6"/><path d="M1351.4 160.4L1345.2 163.8L1345.2 164.8L1349.2 166.8L1355.6 163.2M1345.2 163.8L1349.2 165.8L1355.6 162.2M1349.2 165.8V166.8"/><path d="M1347.4 163.6L1351 165.2M1349.4 162.6L1352.8 164.2" stroke-width="0.7"/></g>
</svg>
<div class="vsep" style="left:943.5px"></div>
<div class="vsep" style="left:993px"></div>
<div class="vsep" style="left:1188.5px"></div>
<div class="vsep" style="left:1237.5px"></div>
<div class="vsep" style="left:1282.5px"></div>
<div class="vsep" style="left:1332px"></div>
</body></html>
